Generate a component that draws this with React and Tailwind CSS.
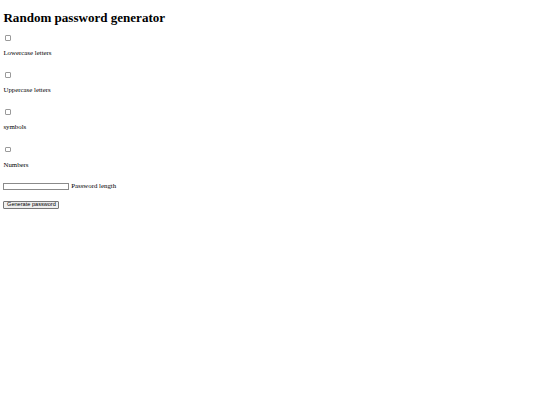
import React from "react";

function Check({ label }) {
  return (
    <div>
      <div className="h-[8.6px] flex items-start">
        <input
          type="checkbox"
          className="appearance-none block w-[5.6px] h-[5.6px] mt-[1.3px] ml-[1.7px] border-[0.6px] border-[#9a9a9a] rounded-[1px] bg-white"
        />
      </div>
      <p className="text-[6.85px] leading-[1.15] mt-[6.8px] mb-[13.9px]">{label}</p>
    </div>
  );
}

export default function App() {
  return (
    <div
      className="w-[540px] h-[405px] bg-white text-black px-[3.44px] pt-[9.6px] overflow-hidden"
      style={{ fontFamily: '"Liberation Serif", "Times New Roman", serif' }}
    >
      <h1 className="text-[13.05px] font-bold leading-[1.15] mb-[9.2px]">
        Random password generator
      </h1>
      <Check label="Lowercase letters" />
      <Check label="Uppercase letters" />
      <Check label="symbols" />
      <Check label="Numbers" />
      <div className="flex items-center h-[8px] mt-[0.8px]">
        <input
          type="text"
          className="block w-[66px] h-[7.6px] border-[0.6px] border-[#8a8a8a] bg-white outline-none"
        />
        <span className="text-[6.85px] leading-[1.15] ml-[1.7px]">Password length</span>
      </div>
      <div className="mt-[10.4px]">
        <button
          className="block h-[8px] px-[2.6px] border-[0.6px] border-[#767676] rounded-[1px] bg-[#efefef] text-[5.6px] leading-none"
          style={{ fontFamily: '"Liberation Sans", Arial, sans-serif' }}
        >
          Generate password
        </button>
      </div>
    </div>
  );
}
